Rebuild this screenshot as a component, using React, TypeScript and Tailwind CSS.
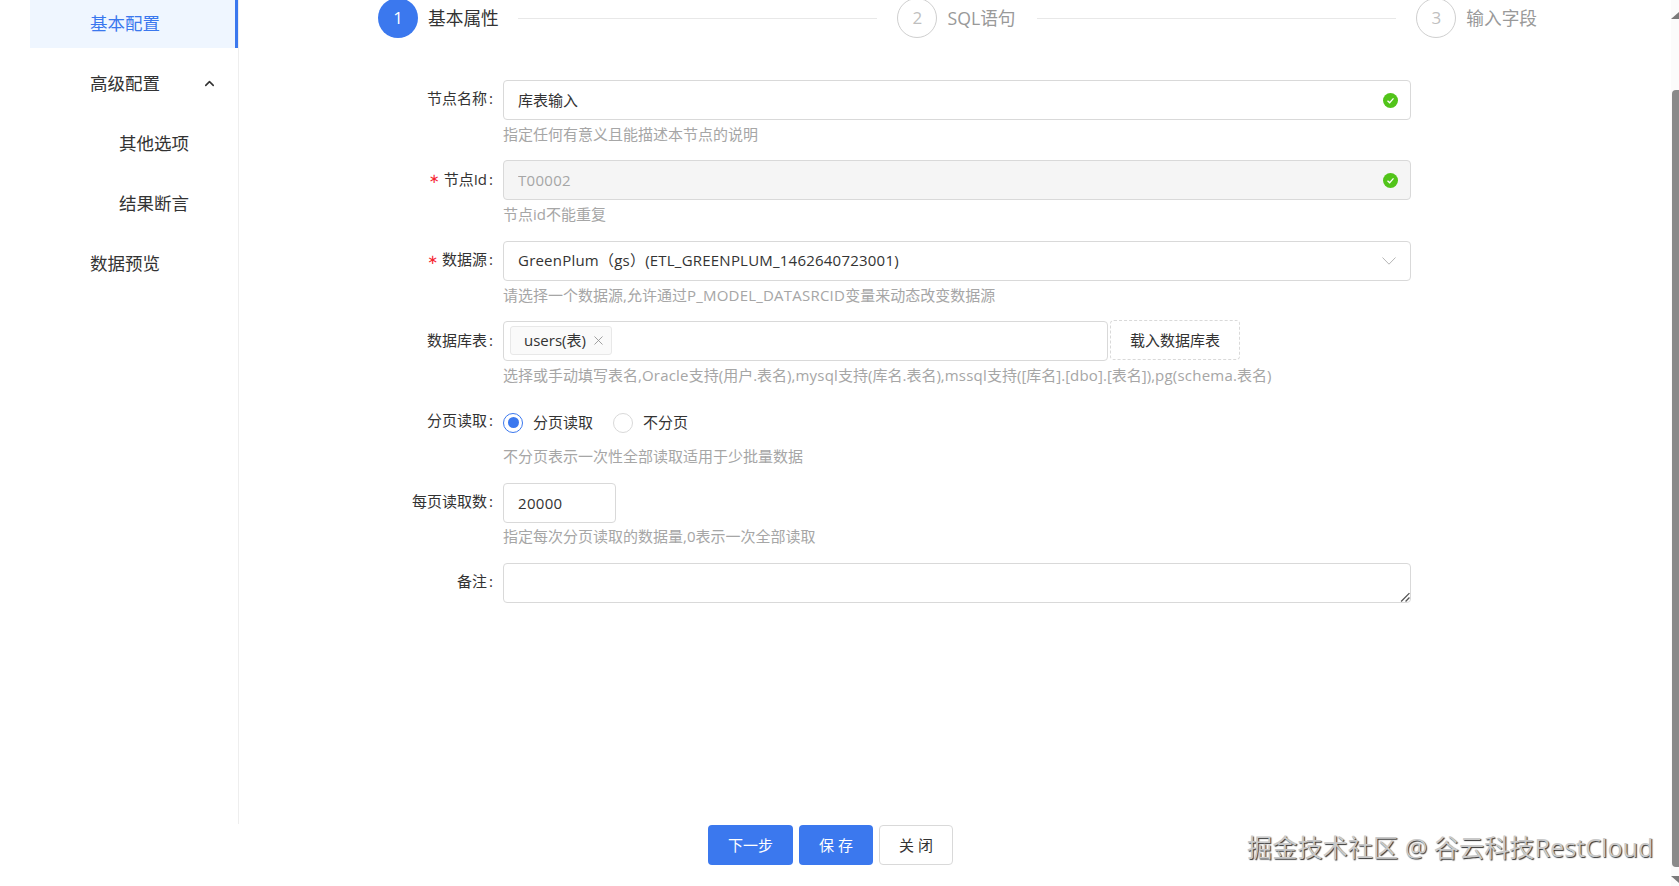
import type { ReactNode } from 'react'
import { ChevronUp, X } from 'lucide-react'

const inputBox = 'h-[40px] rounded-[4px] border border-[#d9d9d9] px-[14px] pb-[1px] text-[15px] outline-none'

function CheckBadge() {
  return (
    <svg viewBox="0 0 16 16" className="absolute right-[13px] top-[13px] h-[15px] w-[15px]">
      <circle cx="8" cy="8" r="8" fill="#52c41a" />
      <path d="M4.8 8.2 7.1 10.4 11.2 5.8" fill="none" stroke="#fff" strokeWidth="1.4" />
    </svg>
  )
}

function Row({ label, required, hint, children }: { label: string; required?: boolean; hint?: ReactNode; children: ReactNode }) {
  return (
    <div className="flex h-[80.5px]">
      <div className="flex h-[38px] w-[264px] shrink-0 items-center justify-end text-[15px] text-[#333]">
        {required && <span className="mr-[4px] font-['DejaVu_Sans',sans-serif] text-[13px] text-[#f5222d]">∗</span>}
        {label}
        <span className="ml-[2px] mr-[10px]">:</span>
      </div>
      <div className="min-w-0 flex-1">
        <div className="flex h-[40px] items-center">{children}</div>
        <div className="mt-[3px] h-[22px] whitespace-nowrap text-[15px] leading-[22px] text-[#a6a6a6]">{hint}</div>
      </div>
    </div>
  )
}

function Step({ n, title, active }: { n: number; title: string; active?: boolean }) {
  return (
    <div className="flex shrink-0 items-center">
      <div
        className={
          active
            ? 'flex h-[40px] w-[40px] items-center justify-center rounded-full bg-[#3b78ee] text-[17px] text-white'
            : 'flex h-[40px] w-[40px] items-center justify-center rounded-full border border-[#cfcfcf] text-[17px] text-[#bfbfbf]'
        }
      >
        {n}
      </div>
      <span className={active ? 'ml-[10px] text-[17.7px] text-[#333]' : 'ml-[10px] text-[17.7px] text-[#999]'}>{title}</span>
    </div>
  )
}

// latin runs in the reference come out a little wider than this font
function Latin({ children }: { children: ReactNode }) {
  return <span className="tracking-[0.22px]">{children}</span>
}

export default function App() {
  return (
    <div className="relative flex h-[886px] w-[1679px] overflow-hidden bg-white font-['Open_Sans','Noto_Sans_CJK_SC',sans-serif] text-[#333]">
      {/* left menu */}
      <aside className="h-[824px] w-[239px] shrink-0 border-r border-[#eeeeee] pl-[30px] text-[17.5px]">
        <div className="flex h-[48px] items-center border-r-[3px] border-[#3b78ee] bg-[#eff6ff] pb-[2px] pl-[60px] text-[#3b78ee]">基本配置</div>
        <div className="mt-[12px] flex h-[48px] items-center justify-between pb-[2px] pl-[60px] pr-[21px]">
          高级配置
          <ChevronUp size={15} strokeWidth={2.5} />
        </div>
        <div className="mt-[12px] flex h-[48px] items-center pb-[2px] pl-[89px]">其他选项</div>
        <div className="mt-[12px] flex h-[48px] items-center pb-[2px] pl-[89px]">结果断言</div>
        <div className="mt-[12px] flex h-[48px] items-center pb-[2px] pl-[60px]">数据预览</div>
      </aside>

      <main className="flex min-w-0 flex-1 flex-col">
        <div className="-mt-[2px] ml-[139px] flex h-[40px] w-[1159px] items-center">
          <Step n={1} title="基本属性" active />
          <div className="ml-[19px] mr-[20px] h-px flex-1 bg-[#e8e8e8]" />
          <Step n={2} title="SQL语句" />
          <div className="ml-[21px] mr-[20px] h-px flex-1 bg-[#e8e8e8]" />
          <Step n={3} title="输入字段" />
        </div>

        <form className="mt-[41.7px]">
          <Row label="节点名称" hint="指定任何有意义且能描述本节点的说明">
            <div className="relative w-[908px]">
              <input readOnly value="库表输入" className={`${inputBox} w-full`} />
              <CheckBadge />
            </div>
          </Row>
          <Row label="节点Id" required hint="节点id不能重复">
            <div className="relative w-[908px]">
              <input readOnly disabled value="T00002" className={`${inputBox} w-full bg-[#f5f5f5] tracking-[0.3px] text-[#a6a6a6]`} />
              <CheckBadge />
            </div>
          </Row>
          <Row
            label="数据源"
            required
            hint={
              <>
                请选择一个数据源,允许通过<Latin>P_MODEL_DATASRCID</Latin>变量来动态改变数据源
              </>
            }
          >
            <div className={`${inputBox} flex w-[908px] items-center justify-between`}>
              <Latin>GreenPlum（gs）(ETL_GREENPLUM_1462640723001)</Latin>
              <svg viewBox="0 0 14 8" className="mt-[1px] h-[8px] w-[14px] text-[#b5b5b5]">
                <path d="M.5.5 7 7.2 13.5.5" fill="none" stroke="currentColor" />
              </svg>
            </div>
          </Row>
          <Row
            label="数据库表"
            hint={
              <>
                选择或手动填写表名,<Latin>Oracle</Latin>支持(用户.表名),<Latin>mysql</Latin>支持(库名.表名),<Latin>mssql</Latin>支持([库名].[<Latin>dbo</Latin>].[表名]),<Latin>pg(schema</Latin>.表名)
              </>
            }
          >
            <div className={`${inputBox} flex w-[605px] items-center pl-[6px]`}>
              <div className="flex h-[29px] w-[102px] items-center rounded-[3px] border border-[#e8e8e8] bg-[#fafafa] pl-[13px]">
                users(表)
                <X size={15} strokeWidth={1.3} className="ml-[5px] text-[#8c8c8c]" />
              </div>
            </div>
            <button type="button" className="ml-[2px] h-[40px] w-[130px] -translate-y-[1px] rounded-[4px] border border-dashed border-[#d9d9d9] text-[15px]">
              载入数据库表
            </button>
          </Row>
          <Row label="分页读取" hint="不分页表示一次性全部读取适用于少批量数据">
            <label className="flex translate-y-[1px] items-center text-[15px]">
              <span className="flex h-[20px] w-[20px] items-center justify-center rounded-full border border-[#3b78ee]">
                <span className="h-[11px] w-[11px] rounded-full bg-[#3b78ee]" />
              </span>
              <span className="ml-[10px]">分页读取</span>
            </label>
            <label className="ml-[20px] flex translate-y-[1px] items-center text-[15px]">
              <span className="h-[20px] w-[20px] rounded-full border border-[#d9d9d9]" />
              <span className="ml-[10px]">不分页</span>
            </label>
          </Row>
          <Row label="每页读取数" hint="指定每次分页读取的数据量,0表示一次全部读取">
            <input readOnly value="20000" className={`${inputBox} w-[113px] translate-y-[1px] tracking-[0.3px]`} />
          </Row>
          <Row label="备注">
            <div className="relative">
              <textarea className={`${inputBox} block w-[908px] resize-none py-[8px]`} />
              <svg viewBox="0 0 9 9" className="absolute bottom-[1px] right-[1px] h-[10px] w-[10px] text-[#555]">
                <path d="M1 8.5 8.5 1M5 8.5 8.5 5" fill="none" stroke="currentColor" strokeWidth="1.2" />
              </svg>
            </div>
          </Row>
        </form>

        <div className="mb-[21px] ml-[469px] mt-auto flex gap-[6px] text-[15px]">
          <button type="button" className="h-[40px] w-[85px] rounded-[4px] bg-[#3b78ee] text-white">下一步</button>
          <button type="button" className="h-[40px] w-[74px] rounded-[4px] bg-[#3b78ee] text-white">保 存</button>
          <button type="button" className="h-[40px] w-[74px] rounded-[4px] border border-[#d9d9d9] bg-white">关 闭</button>
        </div>
      </main>

      {/* page scrollbar, cut by the window edge */}
      <div className="flex w-[8px] shrink-0 flex-col bg-[#fbfbfb]">
        <div className="mt-[12px] h-0 w-0 border-x-[8px] border-b-[7px] border-x-transparent border-b-[#7a7a7a]" />
        <div className="ml-[1px] mt-[71px] h-[777px] w-[7px] rounded-l-[4px] bg-[#8a8a8a]" />
        <div className="mt-[9px] h-0 w-0 border-x-[8px] border-t-[7px] border-x-transparent border-t-[#7a7a7a]" />
      </div>

      <div className="absolute left-[1247px] top-[830px] whitespace-nowrap text-[25.2px] leading-[34px] text-[#c9c9c9] [text-shadow:1px_1px_1px_#333]">
        掘金技术社区 @ 谷云科技RestCloud
      </div>
    </div>
  )
}
